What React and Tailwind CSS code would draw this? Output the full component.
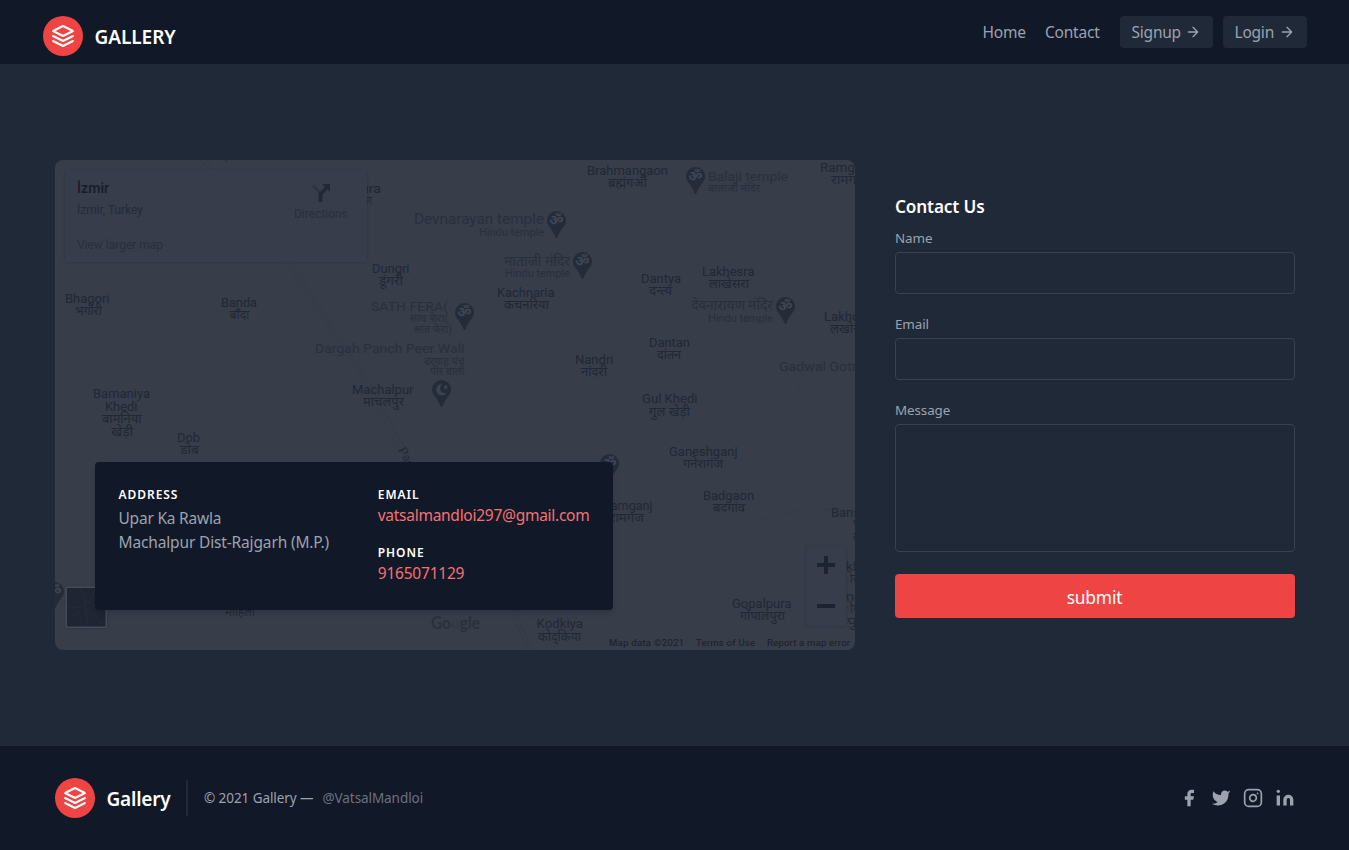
import React from "react";

const LABELS = [
  // text, x, baseline, width, size, tone
  ["ura", 361, 193, 20, 13, "a"],
  ["ाग", 362, 205, 10, 12, "a"],
  ["Brahmangaon", 587, 175, 81, 13, "a"],
  ["ब्रह्मंगओं", 608, 187, 39, 12, "a"],
  ["Balaji temple", 708, 181, 80, 13.5, "b"],
  ["बालाजी मंदिर", 708, 191.5, 52, 10.5, "b"],
  ["Ramgarh", 820, 171.5, 54, 13, "a"],
  ["रामगढ", 831, 184, 33, 12, "a"],
  ["Devnarayan temple", 414, 224, 130, 14, "b"],
  ["Hindu temple", 479, 236, 65, 11, "b"],
  ["माताजी मंदिर", 504, 266, 66, 13.5, "b"],
  ["Hindu temple", 505, 277, 65, 11, "b"],
  ["Kachnaria", 497, 297, 57.5, 13, "a"],
  ["कचनरिया", 504, 309, 45, 12, "a"],
  ["Dungri", 372, 273, 37.5, 13, "a"],
  ["डूंगरी", 379, 285, 24, 12, "a"],
  ["SATH FERA(", 371, 311, 77, 13.5, "b"],
  ["साथ फेरा(", 410, 322, 38, 10.5, "b"],
  ["सात फेरा)", 414, 333, 38, 10.5, "b"],
  ["Dantya", 641, 283, 40, 13, "a"],
  ["दन्त्य", 649, 295, 23, 12, "a"],
  ["Lakhesra", 702, 276, 52.5, 13, "a"],
  ["लाखेसरा", 709, 288, 40, 12, "a"],
  ["देवनारायण मंदिर", 691, 309.5, 82, 13.5, "b"],
  ["Hindu temple", 708, 321.5, 65, 11, "b"],
  ["Lakhoni", 824, 320.5, 46, 13, "a"],
  ["लखोनी", 830, 333, 34, 12, "a"],
  ["Bhagori", 65, 302.5, 44.5, 13, "a"],
  ["भगोरी", 75, 315, 27, 12, "a"],
  ["Banda", 221, 306.5, 36, 13, "a"],
  ["बाँदा", 229.5, 319, 20, 12, "a"],
  ["Dargah Panch Peer Wali", 315, 353, 149.5, 13.5, "b"],
  ["दरगाह पंच", 424, 364.5, 40.5, 10.5, "b"],
  ["पीर वाली", 430, 375, 34.5, 10.5, "b"],
  ["Bamaniya", 93, 398, 57, 13, "a"],
  ["Khedi", 105, 411, 32.5, 13, "a"],
  ["बामनिया", 102, 423, 39.5, 12, "a"],
  ["खेड़ी", 111, 436, 22, 12, "a"],
  ["Dob", 177, 442, 23, 13, "a"],
  ["डोब", 180, 454, 19, 12, "a"],
  ["Machalpur", 352, 393.5, 61.5, 13, "a"],
  ["माचलपुर", 363, 406, 41, 12, "a"],
  ["Nandri", 575, 363.5, 38.5, 13, "a"],
  ["नांदरी", 581, 376, 26, 12, "a"],
  ["Dantan", 649, 346.5, 41, 13, "a"],
  ["दांतन", 657, 359, 24, 12, "a"],
  ["Gadwal Gotra", 779, 371, 85, 13.5, "b"],
  ["Gul Khedi", 642, 402.5, 55.5, 13, "a"],
  ["गुल खेड़ी", 649, 415.5, 41, 12, "a"],
  ["Ganeshganj", 669, 455.500, 68.5, 13, "a"],
  ["गनेशगंज", 683, 468, 40, 12, "a"],
  ["Ramganj", 603, 510, 49.5, 13, "a"],
  ["रामगंज", 610, 522, 34, 12, "a"],
  ["Badgaon", 703, 499.5, 51, 13, "a"],
  ["बदगांव", 713, 512, 32, 12, "a"],
  ["Bansi", 831, 516.5, 32, 13, "a"],
  ["भ", 853, 528, 8, 12, "a"],
  ["ब", 853, 541, 8, 12, "a"],
  ["kheri", 846, 570.5, 30, 13, "a"],
  ["ोरखे", 843, 583, 24, 12, "a"],
  ["nda", 846, 600.5, 24, 13, "a"],
  ["ोगी", 843, 613, 20, 12, "a"],
  ["पुरा", 847, 626, 22, 12, "a"],
  ["Gopalpura", 732, 607.5, 59.5, 13, "a"],
  ["गोपालपुरा", 740, 620, 45, 12, "a"],
  ["मोहिला", 225, 616, 30, 12, "a"],
  ["Kodkiya", 536.5, 628, 46.5, 13, "a"],
  ["कोद्किया", 538, 641, 43, 12, "a"],
];

const TONES = { a: "#212836", b: "#29303d" };

const PINS = [
  [695.5, 167, "ॐ"],
  [556.5, 211, "ॐ"],
  [582.5, 252, "ॐ"],
  [464.5, 303, "ॐ"],
  [785.5, 297, "ॐ"],
  [609.5, 454, "ॐ"],
  [54.5, 582, "ॐ"],
  [441.5, 380, "moon"],
];

function Pin({ x, y, kind }) {
  return (
    <g transform={`translate(${x} ${y})`}>
      <path d="M0 0a9.5 9.5 0 0 1 9.5 9.5c0 5.5-5.5 8-8.3 16.3q-1.2 2.4-2.4 0C-4 17.500-9.500 15-9.500 9.500A9.500 9.500 0 0 1 0 0z" fill="#252c39" />
      {kind === "moon" ? (
        <g fill="#3b424e">
          <path d="M1 4.200a5.600 5.600 0 1 0 4.400 8.200A4.600 4.600 0 1 1 1 4.200z" />
          <path d="M4.200 4.600l.8 1.700 1.800.2-1.300 1.200.4 1.800-1.700-.9-1.600.9.300-1.800-1.300-1.200 1.800-.2z" />
        </g>
      ) : (
        <text x="0" y="14.300" textAnchor="middle" fontSize="14" fontWeight="700" fill="#3f4652">
          {kind}
        </text>
      )}
    </g>
  );
}

function MapView() {
  return (
    <svg
      className="absolute inset-0 h-full w-full font-[Roboto,'Noto_Sans',sans-serif]"
      viewBox="55 160 800 490"
      preserveAspectRatio="none"
    >
      <defs>
        <filter id="soft" x="-5%" y="-5%" width="110%" height="115%">
          <feDropShadow dx="0" dy="0.500" stdDeviation="1.500" floodColor="#111827" floodOpacity="0.18" />
        </filter>
      </defs>
      <rect x="55" y="160" width="800" height="490" fill="#373d49" />
      <g fill="none" stroke="#323a49" strokeWidth="0.8">
        <path d="M199 158L286 262 325 322 366 384 395 442 510 610 528 650" />
        <path d="M204 158L291 262 329 322 370 384 401 442 514 610 532 650" />
        <path d="M510 418Q560 430 600 456" strokeOpacity="0.4" />
        <path d="M821 325Q800 390 776 440" strokeOpacity="0.4" />
        <path d="M625 600Q680 545 760 520T855 525" strokeOpacity="0.35" />
      </g>
      <path d="M226.500 160v1.500" stroke="#252c39" strokeWidth="1.200" />
      {LABELS.map(([t, x, y, w, s, tone]) => (
        <text key={`${t}${x}-${y}`} x={x} y={y} fontSize={s} fill={TONES[tone]} textLength={w} lengthAdjust="spacingAndGlyphs">
          {t}
        </text>
      ))}
      <text transform="translate(398 450) rotate(62)" fontSize="12" fill="#232a37">
        Pachor
      </text>
      {PINS.map(([x, y, k]) => (
        <Pin key={`${x}`} x={x} y={y} kind={k} />
      ))}

      <rect x="65" y="170" width="302" height="92" rx="2" fill="#383e4b" filter="url(#soft)" />
      <text x="77" y="193" fontSize="14" fontWeight="500" fill="#161c2a" textLength="32">İzmir</text>
      <text x="77" y="214" fontSize="12" fill="#242b38" textLength="66">İzmir, Turkey</text>
      <text x="77" y="248.500" fontSize="12" fill="#282f3d" textLength="86">View larger map</text>
      <text x="294" y="218" fontSize="12" fill="#282f3d" textLength="53.500">Directions</text>
      <path d="M313 185.500l6.500 6.500" stroke="#2d3441" strokeWidth="3" />
      <path d="M320.500 202v-8l6-6" fill="none" stroke="#222936" strokeWidth="3.800" />
      <path d="M322 184h8v8z" fill="#222936" />

      <rect x="806" y="546" width="40" height="80" rx="2" fill="#383e4b" filter="url(#soft)" />
      <path d="M817 565h18M826 556v18M817 606h18" stroke="#1c2331" strokeWidth="4" />

      <rect x="65.500" y="586.500" width="41.500" height="41.500" rx="1" fill="#454b57" filter="url(#soft)" />
      <rect x="67" y="588" width="38.500" height="38.500" fill="#1f2532" />
      <path d="M67 606l12 2 8-6 10 5 8-7M80 588l5 12 2 26M92 612l10 12M70 618l12-8M95 590l-6 14" fill="none" stroke="#272d3a" strokeWidth="0.8" />

      <text x="431" y="629" className="font-['Lato',sans-serif]" fontSize="16.500" fontWeight="700" fill="#2a313e" textLength="49" lengthAdjust="spacingAndGlyphs">
        Go<tspan fill="#333a47">o</tspan>gle
      </text>
      <g fontSize="9.500" fill="#171e2c">
        <text x="609" y="646" textLength="75">Map data ©2021</text>
        <text x="696" y="646" textLength="59">Terms of Use</text>
        <text x="767" y="646" textLength="83">Report a map error</text>
      </g>
    </svg>
  );
}

function Logo() {
  return (
    <svg
      className="h-10 w-10 shrink-0 rounded-full bg-[#ef4444] p-2 text-white"
      viewBox="0 0 24 24"
      fill="none"
      stroke="currentColor"
      strokeWidth="2"
      strokeLinecap="round"
      strokeLinejoin="round"
    >
      <path d="M12 2L2 7l10 5 10-5-10-5zM2 17l10 5 10-5M2 12l10 5 10-5" />
    </svg>
  );
}

function Arrow() {
  return (
    <svg className="ml-1 h-4 w-4 shrink-0" viewBox="0 0 24 24" fill="none" stroke="currentColor" strokeWidth="2" strokeLinecap="round" strokeLinejoin="round">
      <path d="M5 12h14M12 5l7 7-7 7" />
    </svg>
  );
}

function Header() {
  return (
    <header className="h-16 bg-[#111827]">
      <div className="mx-auto flex w-[1280px] items-start justify-between px-2 pt-4">
        <a className="flex items-center text-white">
          <Logo />
          <span className="ml-3 pt-0.5 text-[19px] leading-7 font-semibold tracking-[-0.05px]">GALLERY</span>
        </a>
        <nav className="flex h-8 items-center text-[15.5px] leading-6 tracking-[-0.22px]">
          <a className="mr-5 w-[42.5px] whitespace-nowrap">Home</a>
          <a className="mr-5 w-[54.5px] whitespace-nowrap">Contact</a>
          <button className="mr-2.5 flex h-8 w-[93px] items-center justify-between rounded bg-[#1f2937] px-3">
            Signup
            <Arrow />
          </button>
          <button className="flex h-8 w-[84px] items-center justify-between rounded bg-[#1f2937] px-3">
            Login
            <Arrow />
          </button>
        </nav>
      </div>
    </header>
  );
}

function InfoCard() {
  const title = "text-[12px] leading-[17px] font-semibold tracking-[0.95px] text-white";
  return (
    <div className="relative flex h-[148px] w-[518.5px] rounded bg-[#111827] py-6 text-[15.5px] tracking-[-0.22px] shadow-md">
      <div className="w-1/2 px-6">
        <h2 className={title}>ADDRESS</h2>
        <p className="mt-[3px] leading-6 whitespace-nowrap">
          Upar Ka Rawla
          <br />
          <span className="tracking-[-0.15px]">Machalpur Dist-Rajgarh (M.P.)</span>
        </p>
      </div>
      <div className="w-1/2 px-6">
        <h2 className={title}>EMAIL</h2>
        <a className="block leading-[25px] tracking-[-0.27px] text-[#f87171]">vatsalmandloi297@gmail.com</a>
        <h2 className={`${title} mt-4`}>PHONE</h2>
        <p className="leading-[25px] text-[#f87171]">9165071129</p>
      </div>
    </div>
  );
}

function ContactForm() {
  const field = "w-full rounded border border-[#374151] bg-[#1f2937] px-3 outline-none";
  const label = "pl-[0.5px] text-[13.4px] leading-7 tracking-[-0.1px]";
  return (
    <form className="flex w-[400px] flex-col py-8">
      <h2 className="h-8 pt-px pl-[0.5px] text-[17.2px] leading-7 font-semibold tracking-[-0.15px] text-white">Contact Us</h2>
      <label className={label}>Name</label>
      <input className={`${field} mb-4 h-[42px]`} />
      <label className={label}>Email</label>
      <input className={`${field} mb-4 h-[42px]`} />
      <label className={label}>Message</label>
      <textarea className={`${field} mb-[22px] h-32 resize-none`} />
      <button type="button" className="h-11 rounded bg-[#ef4444] pt-0.5 text-[17.4px] leading-7 tracking-[-0.2px] text-white">
        submit
      </button>
    </form>
  );
}

function Footer() {
  return (
    <footer className="bg-[#111827]">
      <div className="mx-auto flex w-[1280px] items-center px-5 py-8">
        <a className="flex items-center text-white">
          <Logo />
          <span className="ml-3 w-[63.500px] pt-0.5 text-[19px] leading-7 font-semibold tracking-[-0.2px] whitespace-nowrap">Gallery</span>
        </a>
        <p className="ml-4 flex border-l-2 border-[#1f2937] py-2 pl-4 text-[13.5px] leading-5 tracking-[-0.07px] whitespace-nowrap">
          <span className="w-[110.500px]">© 2021 Gallery —</span>
          <a className="ml-2 text-[#6b7280]">@VatsalMandloi</a>
        </p>
        <div className="ml-auto flex gap-3">
          <svg className="h-5 w-5" viewBox="0 0 24 24" fill="currentColor">
            <path d="M18 2h-3a5 5 0 00-5 5v3H7v4h3v8h4v-8h3l1-4h-4V7a1 1 0 011-1h3z" />
          </svg>
          <svg className="h-5 w-5" viewBox="0 0 24 24" fill="currentColor">
            <path d="M23 3a10.900 10.900 0 01-3.140 1.530 4.480 4.480 0 00-7.860 3v1A10.660 10.660 0 013 4s-4 9 5 13a11.640 11.640 0 01-7 2c9 5 20 0 20-11.500a4.500 4.500 0 00-.08-.83A7.720 7.720 0 0023 3z" />
          </svg>
          <svg className="h-5 w-5" viewBox="0 0 24 24" fill="none" stroke="currentColor" strokeWidth="2" strokeLinecap="round" strokeLinejoin="round">
            <rect width="20" height="20" x="2" y="2" rx="5" ry="5" />
            <path d="M16 11.370A4 4 0 1112.630 8 4 4 0 0116 11.370zm1.500-4.870h.01" />
          </svg>
          <svg className="h-5 w-5" viewBox="0 0 24 24" fill="currentColor">
            <path d="M16 8a6 6 0 016 6v7h-4v-7a2 2 0 00-2-2 2 2 0 00-2 2v7h-4v-7a6 6 0 016-6zM2 9h4v12H2z" />
            <circle cx="4" cy="4" r="2" />
          </svg>
        </div>
      </div>
    </footer>
  );
}

export default function App() {
  return (
    <div className="h-[850px] overflow-hidden bg-[#1f2937] font-['Noto_Sans','Open_Sans',sans-serif] text-[#9ca3af]">
      <Header />
      <main className="mx-auto flex w-[1280px] gap-10 px-5 py-24">
        <section className="relative flex h-[490px] w-[800px] items-end overflow-hidden rounded-lg p-10">
          <MapView />
          <InfoCard />
        </section>
        <ContactForm />
      </main>
      <Footer />
    </div>
  );
}
